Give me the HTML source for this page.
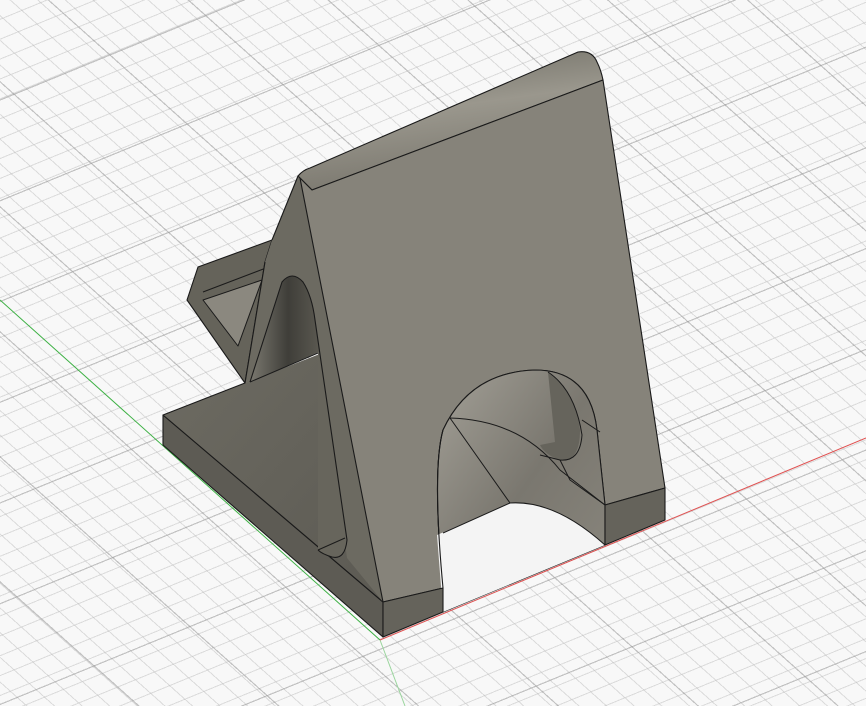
<!DOCTYPE html>
<html><head><style>
html,body{margin:0;padding:0;}
body{width:866px;height:706px;overflow:hidden;position:relative;background:#f8f8f8;}
.g{position:absolute;inset:0;
background:
repeating-linear-gradient(157.7deg, rgba(0,0,0,0) 0 92px, rgba(150,150,150,.55) 92px 93.2px),
repeating-linear-gradient(41.8deg, rgba(0,0,0,0) 0 92px, rgba(150,150,150,.55) 92px 93.2px),
repeating-linear-gradient(157.7deg, rgba(0,0,0,0) 0 17.4px, rgba(190,190,190,.5) 17.4px 18.4px),
repeating-linear-gradient(41.8deg, rgba(0,0,0,0) 0 17.4px, rgba(190,190,190,.5) 17.4px 18.4px);}
svg{position:absolute;left:0;top:0;}
</style></head><body>
<div class="g"></div>
<svg width="866" height="706" viewBox="0 0 866 706">
<defs>
<linearGradient id="hole" x1="0" y1="0" x2="1" y2="0">
<stop offset="0" stop-color="#7a786f"/><stop offset=".55" stop-color="#3f3e39"/><stop offset="1" stop-color="#5a5850"/></linearGradient>
<linearGradient id="arch" x1="0" y1="0" x2="1" y2="1">
<stop offset="0" stop-color="#a3a097"/><stop offset=".5" stop-color="#7a776f"/><stop offset="1" stop-color="#8a877e"/></linearGradient>
<linearGradient id="base" x1="0" y1="0" x2="1" y2="1">
<stop offset="0" stop-color="#6d6b62"/><stop offset="1" stop-color="#5c5a53"/></linearGradient>
<linearGradient id="roll" x1="0" y1="0" x2="0.3" y2="1">
<stop offset="0" stop-color="#6a685f"/><stop offset=".5" stop-color="#9a978d"/><stop offset="1" stop-color="#7a776e"/></linearGradient>
</defs>
<line x1="0" y1="300" x2="380" y2="640" stroke="#3cb043" stroke-width="1"/>
<line x1="380" y1="640" x2="405" y2="706" stroke="#9ad59d" stroke-width="1"/>
<line x1="380" y1="640" x2="866" y2="438" stroke="#e05050" stroke-width="1"/>
<g stroke="#1a1a1a" stroke-width="1.1" stroke-linejoin="round">
<polygon points="163,415 383,602 383,637 163,445" fill="#5d5b54"/>
<polygon points="163,415 330,350 383,602" fill="url(#base)" stroke="none"/>
<polyline points="245,383 163,415 383,602" fill="none"/>
<polygon points="298,176 312,190 383,602 347,558 318,352 250,382 245,383" fill="#6c6a61" stroke="none"/>
<!-- lip -->
<polygon points="187,300 198,267 272,240 265,262 245,383" fill="#65635a"/>
<polygon points="203,300 262,280 238,346" fill="#8b887f" stroke-width="1"/>
<polyline points="203,292 266,268" fill="none" stroke-width="1"/>
<!-- arm -->
<polygon points="298,176 312,190 290,272 250,382 245,383 265,262 272,240" fill="#6c6a61" stroke="none"/>
<polyline points="298,176 272,240" fill="none"/>
<polyline points="265,262 245,383" fill="none"/>
<!-- hole -->
<path d="M250,382 L282,282 Q292,270 303,282 Q312,296 315,320 L347,540 Q345,560 332,557 Q322,554 318,550 L318,352 Z" fill="#67655c" stroke="none"/>
<path d="M250,382 L282,282 Q292,270 303,282 Q312,296 315,320 L319,352 Z" fill="url(#hole)" stroke="none"/>
<path d="M250,382 L282,282 Q292,270 303,282 Q312,296 315,320 L347,540 Q345,560 332,557 Q322,554 318,550" fill="none"/>
<line x1="250" y1="382" x2="318" y2="353" stroke-width="1"/>
<line x1="318" y1="550" x2="345" y2="538" stroke-width="1"/>
<!-- roll -->
<path d="M298,176 Q303,170 310,168 L578,52 Q592,50 597,62 Q601,70 603,80 L312,190 Z" fill="url(#roll)"/>
<!-- front face -->
<path d="M300,178 L312,190 L603,80 L665,488 L605,505 L597,430 Q590,370 535,370 Q470,372 443,430 Q432,470 443,588 L383,602 Z" fill="#86837a"/>
<!-- arch interior -->
<path d="M605,505 L597,430 Q590,370 535,370 Q470,372 443,430 Q432,470 443,588 L443,612 L605,545 Z" fill="url(#arch)"/>
<path d="M548,372 Q575,390 580,430 Q580,462 560,460 Q545,455 540,445 L555,442 Z" fill="#66645c" stroke="none"/>
<path d="M548,372 Q575,390 582,435 Q580,462 560,460 L540,455" fill="none" stroke-width="1"/>
<path d="M582,420 L600,432" fill="none" stroke-width="1"/>
<path d="M560,460 L570,480 L605,505" fill="none" stroke-width="1"/>
<path d="M450,418 Q520,420 560,470 L605,505" fill="none" stroke-width="1"/>
<path d="M450,418 L510,503" fill="none" stroke-width="1"/>
<path d="M437,535 L510,503 Q555,500 605,545 L443,612 Z" fill="#f4f4f4" stroke="none"/>
<path d="M443,533 L510,503 Q555,500 605,545" fill="none" stroke-width="1"/>
<path d="M443,430 Q432,470 443,588" fill="none"/>
<polygon points="383,602 443,588 443,612 383,637" fill="#65635b"/>
<polygon points="605,505 665,488 665,520 605,545" fill="#65635b"/>
</g>
</svg>
</body></html>
